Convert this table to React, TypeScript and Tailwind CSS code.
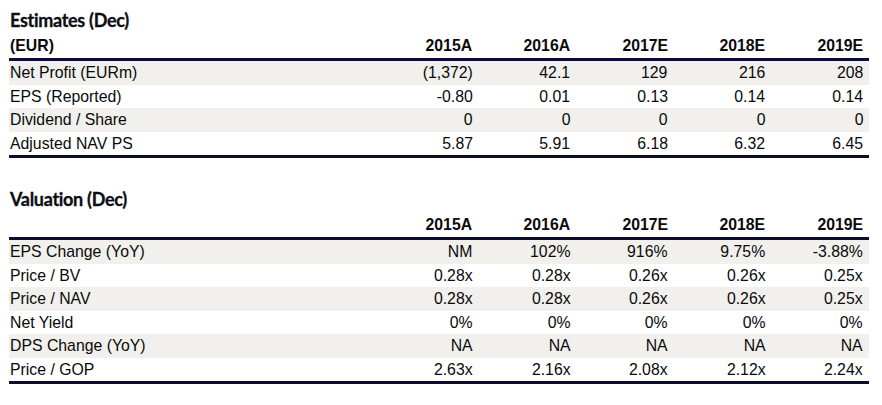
const years = ['2015A', '2016A', '2017E', '2018E', '2019E']

const estimates: [string, string[]][] = [
  ['Net Profit (EURm)', ['(1,372)', '42.1', '129', '216', '208']],
  ['EPS (Reported)', ['-0.80', '0.01', '0.13', '0.14', '0.14']],
  ['Dividend / Share', ['0', '0', '0', '0', '0']],
  ['Adjusted NAV PS', ['5.87', '5.91', '6.18', '6.32', '6.45']],
]

const valuation: [string, string[]][] = [
  ['EPS Change (YoY)', ['NM', '102%', '916%', '9.75%', '-3.88%']],
  ['Price / BV', ['0.28x', '0.28x', '0.26x', '0.26x', '0.25x']],
  ['Price / NAV', ['0.28x', '0.28x', '0.26x', '0.26x', '0.25x']],
  ['Net Yield', ['0%', '0%', '0%', '0%', '0%']],
  ['DPS Change (YoY)', ['NA', 'NA', 'NA', 'NA', 'NA']],
  ['Price / GOP', ['2.63x', '2.16x', '2.08x', '2.12x', '2.24x']],
]

// condensed look of the original (Arial Narrow style)
const label = 'inline-block origin-left scale-x-[0.93] whitespace-nowrap'
const num = 'inline-block origin-right scale-x-[0.93] whitespace-nowrap'

function Row({ name, cells, shaded }: { name: string; cells: string[]; shaded: boolean }) {
  return (
    <div className={`grid h-[23.5px] grid-cols-[372px_repeat(5,1fr)] items-center text-[17px] leading-[23px] ${shaded ? 'bg-[#f1f0ec]' : ''}`}>
      <span className="pl-px">
        <span className={label}>{name}</span>
      </span>
      {cells.map((c, i) => (
        <span key={i} className="pr-1.5 text-right">
          <span className={num}>{c}</span>
        </span>
      ))}
    </div>
  )
}

function Table({ title, unit, rows }: { title: string; unit: string; rows: [string, string[]][] }) {
  return (
    <div>
      <div className="h-7 pl-px font-['Lato',sans-serif] text-[18px] font-bold leading-7 tracking-[-0.3px] text-[#0d0d14] [-webkit-text-stroke:0.3px_#0d0d14]">
        {title}
      </div>
      <div className="grid h-6 grid-cols-[372px_repeat(5,1fr)] items-center text-[17px] font-bold leading-6">
        <span className="pl-px">
          <span className={label}>{unit}</span>
        </span>
        {years.map((y) => (
          <span key={y} className="pr-1.5 text-right">
            <span className={num}>{y}</span>
          </span>
        ))}
      </div>
      <div className="border-t-[3px] border-b-[3px] border-[#0c0c2e]">
        {rows.map(([name, cells], i) => (
          <Row key={name} name={name} cells={cells} shaded={i % 2 === 0} />
        ))}
      </div>
    </div>
  )
}

export default function App() {
  return (
    <div className="h-[405px] w-[882px] bg-white pt-1.5 pl-[9px] font-['Liberation_Sans',Arial,sans-serif] text-[#0a0a0a]">
      <div className="flex w-[860px] flex-col gap-[27px]">
        <Table title="Estimates (Dec)" unit="(EUR)" rows={estimates} />
        <Table title="Valuation (Dec)" unit="" rows={valuation} />
      </div>
    </div>
  )
}
